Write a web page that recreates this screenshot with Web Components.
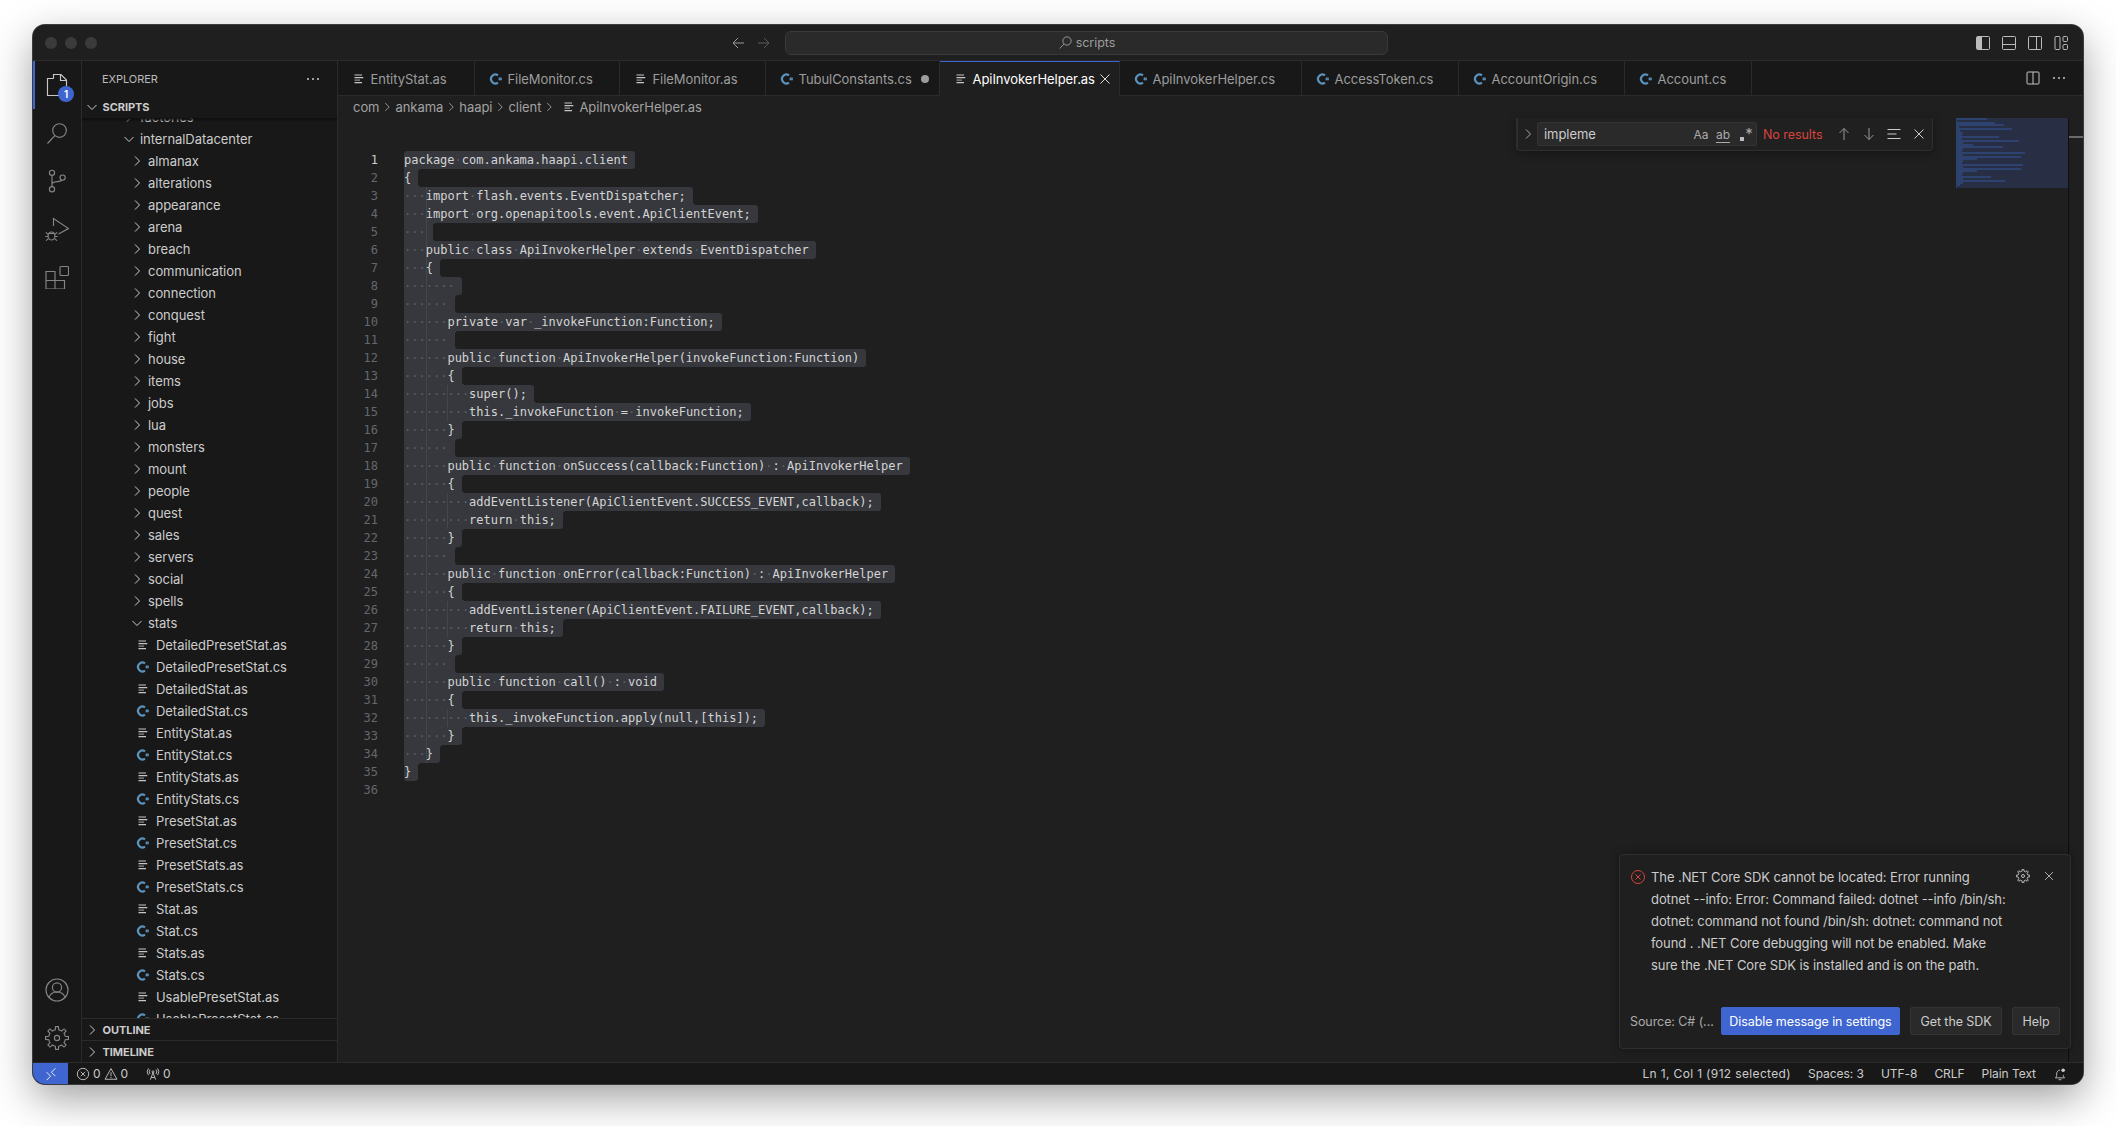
<!DOCTYPE html>
<html lang="en">
<head>
<meta charset="utf-8">
<title>scripts</title>
<style>
  html, body { margin: 0; background: #fff; }
  body { padding: 25px 33px 42px; font-family: Inter, "Liberation Sans", sans-serif; }
</style>
</head>
<body>
<vs-window>
  <vs-titlebar slot="title"></vs-titlebar>
  <vs-activitybar slot="activity"></vs-activitybar>
  <vs-sidebar slot="sidebar"></vs-sidebar>
  <vs-tabs slot="tabs">
    <vs-tab kind="as" width="137">EntityStat.as</vs-tab>
    <vs-tab kind="cs" width="145">FileMonitor.cs</vs-tab>
    <vs-tab kind="as" width="146">FileMonitor.as</vs-tab>
    <vs-tab kind="cs" width="174" dirty>TubulConstants.cs</vs-tab>
    <vs-tab kind="as" width="180" active>ApiInvokerHelper.as</vs-tab>
    <vs-tab kind="cs" width="182">ApiInvokerHelper.cs</vs-tab>
    <vs-tab kind="cs" width="157">AccessToken.cs</vs-tab>
    <vs-tab kind="cs" width="166">AccountOrigin.cs</vs-tab>
    <vs-tab kind="cs" width="127">Account.cs</vs-tab>
  </vs-tabs>
  <vs-breadcrumbs slot="crumbs"></vs-breadcrumbs>
  <vs-code slot="code"></vs-code>
  <vs-minimap slot="minimap"></vs-minimap>
  <vs-find slot="overlay"></vs-find>
  <vs-notification slot="overlay"></vs-notification>
  <vs-statusbar slot="status"></vs-statusbar>
</vs-window>

<script>
const CODE = [
  'package com.ankama.haapi.client',
  '{',
  '   import flash.events.EventDispatcher;',
  '   import org.openapitools.event.ApiClientEvent;',
  '   ',
  '   public class ApiInvokerHelper extends EventDispatcher',
  '   {',
  '       ',
  '      ',
  '      private var _invokeFunction:Function;',
  '      ',
  '      public function ApiInvokerHelper(invokeFunction:Function)',
  '      {',
  '         super();',
  '         this._invokeFunction = invokeFunction;',
  '      }',
  '      ',
  '      public function onSuccess(callback:Function) : ApiInvokerHelper',
  '      {',
  '         addEventListener(ApiClientEvent.SUCCESS_EVENT,callback);',
  '         return this;',
  '      }',
  '      ',
  '      public function onError(callback:Function) : ApiInvokerHelper',
  '      {',
  '         addEventListener(ApiClientEvent.FAILURE_EVENT,callback);',
  '         return this;',
  '      }',
  '      ',
  '      public function call() : void',
  '      {',
  '         this._invokeFunction.apply(null,[this]);',
  '      }',
  '   }',
  '}',
  ''
];

function gearPath(cx, cy, outer, inner, teeth) {
  let d = '';
  const step = Math.PI * 2 / teeth;
  for (let i = 0; i < teeth; i++) {
    const a = i * step;
    const pts = [
      [inner, a - step * 0.5], [inner, a - step * 0.26],
      [outer, a - step * 0.16], [outer, a + step * 0.16], [inner, a + step * 0.26]
    ];
    pts.forEach(([r, t], n) => {
      d += `${i === 0 && n === 0 ? 'M' : 'L'}${(cx + r * Math.cos(t)).toFixed(2)} ${(cy + r * Math.sin(t)).toFixed(2)}`;
    });
  }
  return d + 'Z';
}

const ICONS = {
  right: '<path d="M6 3.5 10.5 8 6 12.5"/>',
  down: '<path d="M3.5 6 8 10.5 12.5 6"/>',
  back: '<path d="M8 3 3 8l5 5M3 8h11"/>',
  forward: '<path d="m8 3 5 5-5 5M13 8H2"/>',
  up: '<path d="M3.5 7 8 2.5 12.5 7M8 2.5V14"/>',
  south: '<path d="M3.5 9 8 13.5 12.5 9M8 13.5V2"/>',
  close: '<path d="m3.5 3.5 9 9M12.5 3.5l-9 9"/>',
  search: '<circle cx="9.6" cy="6.4" r="4.4"/><path d="M6.4 9.6 1.8 14.4"/>',
  dots: '<g fill="currentColor" stroke="none"><circle cx="3" cy="8" r="1"/><circle cx="8" cy="8" r="1"/><circle cx="13" cy="8" r="1"/></g>',
  split: '<rect x="2" y="2" width="12" height="12" rx="1"/><path d="M8 2v12"/>',
  selection: '<path d="M1.5 3.5h13M1.5 8h9M1.5 12.5h13"/>',
  sideLeft: '<rect x="1.5" y="1.5" width="13" height="13" rx="1"/><path fill="currentColor" stroke="none" d="M2 2h5v12H2z"/>',
  panel: '<rect x="1.5" y="1.5" width="13" height="13" rx="1"/><path d="M1.5 9.5h13"/>',
  sideRight: '<rect x="1.5" y="1.5" width="13" height="13" rx="1"/><path d="M9.5 1.5v13"/>',
  layout: '<rect x="2" y="1.5" width="5" height="13" rx="1"/><rect x="10" y="1.5" width="4.5" height="5" rx="1"/><rect x="10" y="9.5" width="4.5" height="5" rx="1"/>',
  errorCircle: '<circle cx="8" cy="8" r="6.5"/><path d="m5.4 5.4 5.2 5.2M10.6 5.4l-5.2 5.2"/>',
  warning: '<path d="M8 1.8 14.8 14H1.2Z"/><path d="M8 6v4.5M8 11.5v1.2"/>',
  antenna: '<circle cx="8" cy="5.5" r="1.1"/><path d="M8 6.5 5 14.5M8 6.5l3 8M6 12h4M4.6 3a4 4 0 0 0 0 5M11.4 3a4 4 0 0 1 0 5M2.8 1.6a6.4 6.4 0 0 0 0 7.8M13.2 1.6a6.4 6.4 0 0 1 0 7.8"/>',
  remote: '<path d="M3 6 7.5 10.5 3 15M13 1.5 8.5 6l4.5 4.5"/>',
  bell: '<path d="M3 12.2c1-1 1.2-2.2 1.2-4.2 0-2.4 1.4-4.4 3.8-4.5M13 12.2c-1-.9-1.2-2-1.2-3.2M2.6 12.4h10.8M6.4 14.5h3.2"/><circle cx="11.6" cy="3.8" r="2" fill="currentColor" stroke="none"/>',
  file: '<path stroke-width="1.2" d="M3.5 4h7.5M3.5 6.6h8.8M3.5 11.6h7.5"/><path stroke-width="1.2" opacity=".7" d="M3.5 9.1h5.5"/>',
  csharp: '<path stroke="#5a93bd" stroke-width="2.2" d="M10 4.4a4.4 4.4 0 1 0 0 7.2"/><path stroke="#5a93bd" stroke-width=".9" d="M11.4 6.4v3M13 6.4v3M10.6 7.3h3.2M10.6 8.6h3.2"/>',
  files: '<path d="M8.5 5.5V1.5H16l5.5 5.5v13H16.5"/><path d="M8.5 5.5H2.5v17h14v-2.5"/><path d="M15.5 1.5V7.5h6"/>',
  searchBig: '<circle cx="14.5" cy="9.5" r="6.8"/><path d="M9.8 14.6 2.5 22.5"/>',
  scm: '<circle cx="7" cy="3.8" r="2.6"/><circle cx="7" cy="20.2" r="2.6"/><circle cx="17.6" cy="8.6" r="2.6"/><path d="M7 6.4v11.2M7 15c0-3.2 8.6-1.6 10.2-3.9"/>',
  debug: '<path d="M8.5 9V1.5L23.5 11.5 13.5 17"/><ellipse cx="6.5" cy="19" rx="3.4" ry="4"/><path d="M3.2 17.4.8 15.4M9.8 17.4l2.4-2M3 19.5H.3M10 19.5h2.7M3.4 21.6l-2.4 2M9.6 21.6l2.4 2M3.5 16.5h6"/>',
  extensions: '<path d="M1 6.5h9v9H1zM1 15.5h9v8.5H1zM10 15.5h9.5v8.5H10z"/><rect x="15" y="1.5" width="8.5" height="9" rx="1"/>',
  account: '<circle cx="12" cy="12" r="11"/><circle cx="12" cy="9.5" r="4.6"/><path d="M4 20c.8-3.8 3.6-6 8-6s7.2 2.2 8 6"/>',
  gear: `<path d="${gearPath(12, 12, 11.5, 8.4, 8)}"/><circle cx="12" cy="12" r="2.6"/>`
};

class VsIcon extends HTMLElement {
  connectedCallback() {
    const name = this.getAttribute('name');
    const size = this.getAttribute('size') || 16;
    const box = ['files', 'searchBig', 'scm', 'debug', 'extensions', 'account', 'gear'].includes(name) ? 24 : 16;
    this.attachShadow({ mode: 'open' }).innerHTML = /* html */`
      <style>
        :host { display: inline-flex; flex: none; }
        svg { display: block; fill: none; stroke: currentColor; stroke-width: ${this.getAttribute('weight') || 1}; }
      </style>
      <svg width="${size}" height="${size}" viewBox="0 0 ${box} ${box}">${ICONS[name]}</svg>`;
  }
}

class VsWindow extends HTMLElement {
  constructor() {
    super();
    this.attachShadow({ mode: 'open' }).innerHTML = /* html */`
      <style>
        :host {
          display: grid;
          grid-template-rows: 35px 1fr 22px;
          width: 2050px;
          height: 1059px;
          position: relative;
          border-radius: 12px;
          overflow: hidden;
          background: #1f1f1f;
          color: #ccc;
          box-shadow: 0 0 0 1px #3c3c3c, 0 14px 42px rgba(0,0,0,.38);
          font: 13px Inter, "Liberation Sans", sans-serif;
          letter-spacing: -.05px;
        }
        .main { display: flex; min-height: 0; border-top: 1px solid #2b2b2b; }
        .editor { flex: 1; min-width: 0; display: flex; flex-direction: column; border-left: 1px solid #2b2b2b; }
        .body { flex: 1; min-height: 0; display: flex; }
        .overlays { position: absolute; inset: 0; pointer-events: none; }
      </style>
      <slot name="title"></slot>
      <div class="main">
        <slot name="activity"></slot>
        <slot name="sidebar"></slot>
        <div class="editor">
          <slot name="tabs"></slot>
          <slot name="crumbs"></slot>
          <div class="body">
            <slot name="code"></slot>
            <slot name="minimap"></slot>
          </div>
        </div>
      </div>
      <slot name="status"></slot>
      <div class="overlays"><slot name="overlay"></slot></div>`;
  }
}

class VsTitlebar extends HTMLElement {
  constructor() {
    super();
    this.attachShadow({ mode: 'open' }).innerHTML = /* html */`
      <style>
        :host { display: flex; align-items: center; background: #1f1f1f; position: relative; }
        .lights { display: flex; gap: 8px; padding-left: 12px; width: 60px; }
        .lights i { width: 12px; height: 12px; border-radius: 50%; background: #3b3b3b; }
        .nav { margin-left: 625px; display: flex; gap: 10px; color: #9a9a9a; width: 42px; }
        .nav vs-icon + vs-icon { color: #5a5a5a; }
        .center {
          margin-left: 13px; width: 601px; height: 22px; border: 1px solid #3a3a3a; border-radius: 6px;
          background: #2a2a2a; display: flex; align-items: center; justify-content: center; gap: 3px;
          color: #9d9d9d; font-size: 12.5px;
        }
        .layout { margin-left: auto; display: flex; color: #bbb; padding-right: 9px; }
        .layout span { width: 26px; display: flex; justify-content: center; }
      </style>
      <div class="lights"><i></i><i></i><i></i></div>
      <div class="nav"><vs-icon name="back"></vs-icon><vs-icon name="forward"></vs-icon></div>
      <div class="center"><vs-icon name="search" size="15"></vs-icon><span>scripts</span></div>
      <div class="layout">
        <span><vs-icon name="sideLeft"></vs-icon></span><span><vs-icon name="panel"></vs-icon></span>
        <span><vs-icon name="sideRight"></vs-icon></span><span><vs-icon name="layout"></vs-icon></span>
      </div>`;
  }
}

class VsActivitybar extends HTMLElement {
  constructor() {
    super();
    const item = (name, extra = '') => `<div class="item ${extra}"><vs-icon name="${name}" size="24" weight="1.15"></vs-icon>${extra ? '<b>1</b>' : ''}</div>`;
    this.attachShadow({ mode: 'open' }).innerHTML = /* html */`
      <style>
        :host { display: flex; flex-direction: column; width: 48px; height: 100%; background: #181818; border-right: 1px solid #2b2b2b; flex: none; color: #858585; }
        .item { height: 48px; display: flex; align-items: center; justify-content: center; position: relative; flex: none; }
        .active { color: #c8c8c8; }
        .active::before { content: ''; position: absolute; left: 0; top: 0; bottom: 0; width: 2px; background: #3f66d0; }
        b { position: absolute; left: 25px; top: 25px; width: 16px; height: 16px; border-radius: 50%; background: #3f66d0; color: #fff; font: 600 10px/16px Inter, sans-serif; text-align: center; }
        .spacer { flex: 1; }
      </style>
      ${item('files', 'active')}${item('searchBig')}${item('scm')}${item('debug')}${item('extensions')}
      <div class="spacer"></div>
      ${item('account')}${item('gear')}`;
  }
}

class VsTreeRow extends HTMLElement {
  connectedCallback() {
    const kind = this.getAttribute('kind');
    const glyph = { closed: 'right', open: 'down' }[kind];
    const pad = { 1: 39, 2: 47, 3: 53 }[this.getAttribute('depth')];
    this.attachShadow({ mode: 'open' }).innerHTML = /* html */`
      <style>
        :host { display: flex; align-items: center; height: 22px; padding-left: ${pad}px; color: #ccc; white-space: nowrap; }
        .twist { width: 16px; display: flex; margin-right: 3px; }
        .ficon { width: 16px; display: flex; margin-right: 5px; color: #c5c5c5; }
      </style>
      ${glyph ? `<span class="twist"><vs-icon name="${glyph}"></vs-icon></span>` : `<span class="ficon"><vs-icon name="${kind === 'cs' ? 'csharp' : 'file'}"></vs-icon></span>`}
      <slot></slot>`;
  }
}

class VsSidebar extends HTMLElement {
  constructor() {
    super();
    const folders = ['almanax', 'alterations', 'appearance', 'arena', 'breach', 'communication', 'connection', 'conquest', 'fight', 'house', 'items', 'jobs', 'lua', 'monsters', 'mount', 'people', 'quest', 'sales', 'servers', 'social', 'spells'];
    const files = ['DetailedPresetStat', 'DetailedStat', 'EntityStat', 'EntityStats', 'PresetStat', 'PresetStats', 'Stat', 'Stats', 'UsablePresetStat'];
    const rows = [
      '<vs-tree-row kind="closed" depth="1">factories</vs-tree-row>',
      '<vs-tree-row kind="open" depth="1">internalDatacenter</vs-tree-row>',
      ...folders.map(f => `<vs-tree-row kind="closed" depth="2">${f}</vs-tree-row>`),
      '<vs-tree-row kind="open" depth="2">stats</vs-tree-row>',
      ...files.flatMap(f => [`<vs-tree-row kind="as" depth="3">${f}.as</vs-tree-row>`, `<vs-tree-row kind="cs" depth="3">${f}.cs</vs-tree-row>`])
    ].join('');
    this.attachShadow({ mode: 'open' }).innerHTML = /* html */`
      <style>
        :host { display: flex; flex-direction: column; width: 255px; height: 100%; background: #181818; flex: none; }
        .title { display: flex; align-items: center; justify-content: space-between; height: 35px; padding: 0 16px 0 20px; font-size: 11px; color: #bbb; }
        .title vs-icon { color: #ccc; }
        .section { display: flex; align-items: center; height: 22px; flex: none; font-size: 11px; font-weight: 700; color: #ccc; padding-left: 2px; gap: 2.5px; box-sizing: border-box; }
        .section.rule { border-top: 1px solid #2b2b2b; height: 22px; }
        .section vs-icon { width: 16px; }
        .tree { flex: 1; min-height: 0; overflow: hidden; position: relative; }
        .tree::before { content: ''; position: absolute; left: 0; right: 0; top: 0; height: 4px; background: linear-gradient(#0d0d0d, transparent); z-index: 1; }
        .rows { margin-top: -12px; }
      </style>
      <div class="title"><span>EXPLORER</span><vs-icon name="dots"></vs-icon></div>
      <div class="section"><vs-icon name="down"></vs-icon>SCRIPTS</div>
      <div class="tree"><div class="rows">${rows}</div></div>
      <div class="section rule"><vs-icon name="right"></vs-icon>OUTLINE</div>
      <div class="section rule"><vs-icon name="right"></vs-icon>TIMELINE</div>`;
  }
}

class VsTab extends HTMLElement {
  connectedCallback() {
    const active = this.hasAttribute('active');
    const trail = active ? '<vs-icon name="close" size="16"></vs-icon>' : this.hasAttribute('dirty') ? '<i class="dot"></i>' : '';
    this.attachShadow({ mode: 'open' }).innerHTML = /* html */`
      <style>
        :host {
          display: flex; align-items: center; box-sizing: border-box; flex: none; position: relative;
          width: ${this.getAttribute('width')}px; height: 35px; padding-left: 13px; white-space: nowrap;
          background: ${active ? '#1f1f1f' : '#181818'}; color: ${active ? '#fff' : '#9d9d9d'};
          border-right: 1px solid #2b2b2b;
          ${active ? 'border-top: 1px solid #3f66d0; border-bottom: 1px solid #1f1f1f;' : 'border-top: 1px solid #181818; border-bottom: 1px solid #2b2b2b;'}
        }
        .ficon { margin-right: 3.5px; color: #c5c5c5; display: flex; }
        .trail { position: absolute; right: 6px; top: 0; bottom: 0; width: 16px; display: flex; align-items: center; justify-content: center; color: #ddd; }
        .dot { width: 8px; height: 8px; border-radius: 50%; background: #9d9d9d; }
      </style>
      <span class="ficon"><vs-icon name="${this.getAttribute('kind') === 'cs' ? 'csharp' : 'file'}"></vs-icon></span>
      <slot></slot>
      <span class="trail">${trail}</span>`;
  }
}

class VsTabs extends HTMLElement {
  constructor() {
    super();
    this.attachShadow({ mode: 'open' }).innerHTML = /* html */`
      <style>
        :host { display: flex; height: 35px; flex: none; background: #181818; }
        .rest { flex: 1; border-bottom: 1px solid #2b2b2b; display: flex; align-items: center; justify-content: flex-end; gap: 10px; padding-right: 16px; color: #c5c5c5; }
      </style>
      <slot></slot>
      <div class="rest"><vs-icon name="split"></vs-icon><vs-icon name="dots"></vs-icon></div>`;
  }
}

class VsBreadcrumbs extends HTMLElement {
  constructor() {
    super();
    const sep = '<vs-icon name="right" size="14"></vs-icon>';
    this.attachShadow({ mode: 'open' }).innerHTML = /* html */`
      <style>
        :host { display: flex; align-items: center; height: 22px; flex: none; padding-left: 15px; gap: 1px; color: #a2a2a2; white-space: nowrap; }
        .leaf { display: flex; margin: 0 1px 0 4px; color: #c5c5c5; }
      </style>
      <span>com</span>${sep}<span>ankama</span>${sep}<span>haapi</span>${sep}<span>client</span>${sep}
      <span class="leaf"><vs-icon name="file"></vs-icon></span><span>ApiInvokerHelper.as</span>`;
  }
}

class VsCode extends HTMLElement {
  static get styles() {
    return /* css */`
      :host {
        --sel: #36383d;
        display: block; flex: 1; min-width: 0; padding-top: 33px;
        font: 12px/18px "DejaVu Sans Mono", "Liberation Mono", monospace; color: #d4d4d4;
        letter-spacing: 0; white-space: pre; overflow: hidden;
      }
      .line { display: flex; height: 18px; }
      .num { width: 40px; margin-right: 26px; text-align: right; color: #64686e; flex: none; }
      .num.now { color: #ccc; }
      .sel {
        display: inline-block; height: 18px; padding-right: 1ch; position: relative;
        background-color: var(--sel);
      }
      .g3 { background-image: linear-gradient(#44464b, #44464b); background-size: 1px 100%; background-repeat: no-repeat; background-position: 3ch 0; }
      .g6 { background-image: linear-gradient(#44464b, #44464b), linear-gradient(#44464b, #44464b); background-size: 1px 100%; background-repeat: no-repeat; background-position: 3ch 0, 6ch 0; }
      .ws { color: #5c5e63; }
      .tr { border-top-right-radius: 3px; }
      .br { border-bottom-right-radius: 3px; }
      .tl { border-top-left-radius: 3px; }
      .bl { border-bottom-left-radius: 3px; }
      .ct::before, .cb::after { content: ''; position: absolute; left: 100%; width: 3px; height: 3px; }
      .ct::before { top: 0; background: radial-gradient(circle at 100% 100%, transparent 2.6px, var(--sel) 3.2px); }
      .cb::after { bottom: 0; background: radial-gradient(circle at 100% 0, transparent 2.6px, var(--sel) 3.2px); }
    `;
  }

  constructor() {
    super();
    this.attachShadow({ mode: 'open' });
  }

  connectedCallback() {
    const lens = CODE.map((l, i) => (i === CODE.length - 1 ? 0 : l.length + 1));
    const deep = n => [14, 15, 20, 21, 26, 27, 32].includes(n);
    const rows = CODE.map((text, i) => {
      const n = i + 1;
      const num = `<span class="num${i === 0 ? ' now' : ''}">${n}</span>`;
      if (!lens[i]) return `<div class="line">${num}</div>`;
      const prev = lens[i - 1] || 0;
      const next = lens[i + 1] || 0;
      const cls = ['sel'];
      if (n >= 3 && n <= 34) cls.push(deep(n) ? 'g6' : 'g3');
      if (prev < lens[i]) cls.push('tr');
      if (next < lens[i]) cls.push('br');
      if (prev > lens[i]) cls.push('ct');
      if (next > lens[i]) cls.push('cb');
      if (i === 0) cls.push('tl');
      if (i === 34) cls.push('bl');
      const html = text.replace(/ /g, '<span class="ws">·</span>');
      return `<div class="line">${num}<span class="${cls.join(' ')}">${html}</span></div>`;
    }).join('');
    this.shadowRoot.innerHTML = `<style>${VsCode.styles}</style>${rows}`;
  }
}

class VsMinimap extends HTMLElement {
  constructor() {
    super();
    const rows = CODE.slice(0, 35).map(l => `<div style="width:${l.length}px"></div>`).join('');
    this.attachShadow({ mode: 'open' }).innerHTML = /* html */`
      <style>
        :host { display: flex; flex: none; width: 127px; height: 100%; }
        .map { width: 112px; height: 70px; background: #282f45; }
        .map div { height: 2px; background: #2e4270; }
        .scroll { width: 14px; border-left: 1px solid #0e0e0e; position: relative; }
        .scroll::after { content: ''; position: absolute; left: 0; right: 0; top: 18px; height: 2px; background: #6a6a6a; }
      </style>
      <div class="map">${rows}</div>
      <div class="scroll"></div>`;
  }
}

class VsFind extends HTMLElement {
  constructor() {
    super();
    this.attachShadow({ mode: 'open' }).innerHTML = /* html */`
      <style>
        :host {
          position: absolute; left: 1483px; top: 93px; width: 417px; height: 33px; box-sizing: border-box;
          display: flex; align-items: center; background: #202020; color: #ccc;
          border-left: 2px solid #2e2e2e; border-bottom: 1px solid #2e2e2e; border-right: 1px solid #2e2e2e;
          border-radius: 0 0 4px 4px; box-shadow: 0 2px 8px rgba(0,0,0,.36);
        }
        .toggle { width: 19px; flex: none; display: flex; justify-content: center; color: #aaa; }
        .input {
          width: 220px; flex: none; height: 24px; box-sizing: border-box; display: flex; align-items: center;
          background: #2a2a2a; border: 1px solid #333; border-radius: 2px; padding-left: 6px; color: #ccc;
        }
        .text { flex: 1; }
        .opt { color: #aaa; font-size: 12px; width: 22px; text-align: center; }
        .opt.u { text-decoration: underline; text-underline-offset: 3px; }
        .rx { position: relative; }
        .rx::before { content: ''; position: absolute; left: 6px; bottom: 1px; width: 4px; height: 4px; background: #bbb; }
        .rx span { margin-left: 8px; font-size: 15px; line-height: 10px; }
        .none { margin-left: 6px; width: 69px; flex: none; color: #d8453c; font-size: 12.5px; white-space: nowrap; }
        .act { display: flex; flex: none; color: #999; margin-left: 4px; }
        .act vs-icon { margin-right: 9px; }
        .act vs-icon:last-child { margin-right: 0; }
        .act .on { color: #ccc; }
      </style>
      <span class="toggle"><vs-icon name="right"></vs-icon></span>
      <div class="input">
        <span class="text">impleme</span>
        <span class="opt">Aa</span><span class="opt u">ab</span><span class="opt rx"><span>*</span></span>
      </div>
      <span class="none">No results</span>
      <div class="act">
        <vs-icon name="up"></vs-icon><vs-icon name="south"></vs-icon>
        <vs-icon class="on" name="selection"></vs-icon><vs-icon class="on" name="close"></vs-icon>
      </div>`;
  }
}

class VsNotification extends HTMLElement {
  constructor() {
    super();
    this.attachShadow({ mode: 'open' }).innerHTML = /* html */`
      <style>
        :host {
          position: absolute; left: 1586px; top: 829px; width: 452px; height: 195px; box-sizing: border-box;
          background: #1f1f1f; border: 1px solid #2f2f2f; border-radius: 4px; color: #ccc;
          box-shadow: 0 0 8px rgba(0,0,0,.36); padding: 11px 10px 0 10px; display: flex; flex-direction: column;
          letter-spacing: -.08px;
        }
        .msg { display: flex; height: 141px; line-height: 22px; }
        .err { color: #d8453c; margin: 3px 5px 0 0; display: flex; }
        .text { flex: 1; white-space: nowrap; }
        .tools { display: flex; gap: 12px; color: #c0c0c0; margin: 3px 4px 0 0; }
        .foot { display: flex; align-items: center; font-size: 12.5px; }
        .src { width: 91px; color: #aaa; white-space: nowrap; flex: none; }
        .btn { height: 28px; box-sizing: border-box; display: flex; align-items: center; justify-content: center; flex: none; border: 1px solid #333; border-radius: 2px; background: #2a2a2a; color: #ccc; margin-right: 10px; }
        .btn:last-child { margin-right: 0; }
        .primary { width: 179px; background: #3f66d0; border-color: #3f66d0; color: #fff; }
      </style>
      <div class="msg">
        <span class="err"><vs-icon name="errorCircle"></vs-icon></span>
        <div class="text">The .NET Core SDK cannot be located: Error running<br>dotnet --info: Error: Command failed: dotnet --info /bin/sh:<br>dotnet: command not found /bin/sh: dotnet: command not<br>found . .NET Core debugging will not be enabled. Make<br>sure the .NET Core SDK is installed and is on the path.</div>
        <div class="tools"><vs-icon name="gear" size="14" weight="1.7"></vs-icon><vs-icon name="close" size="14"></vs-icon></div>
      </div>
      <div class="foot">
        <span class="src">Source: C# (...</span>
        <span class="btn primary">Disable message in settings</span>
        <span class="btn" style="width:92px">Get the SDK</span>
        <span class="btn" style="width:48px">Help</span>
      </div>`;
  }
}

class VsStatusbar extends HTMLElement {
  constructor() {
    super();
    this.attachShadow({ mode: 'open' }).innerHTML = /* html */`
      <style>
        :host { display: flex; align-items: center; height: 22px; box-sizing: border-box; background: #181818; border-top: 1px solid #2b2b2b; font-size: 12px; color: #ccc; white-space: nowrap; }
        .remote { width: 35px; align-self: stretch; background: #3f66d0; color: #fff; display: flex; align-items: center; justify-content: center; }
        .left { display: flex; align-items: center; padding-left: 8px; gap: 3px; }
        .wifi { margin-left: 15px; }
        .right { margin-left: auto; display: flex; align-items: center; gap: 17px; padding-right: 16px; }
        .pos { letter-spacing: .35px; }
      </style>
      <div class="remote"><vs-icon name="remote" size="14"></vs-icon></div>
      <div class="left">
        <vs-icon name="errorCircle" size="14"></vs-icon><span>0</span>
        <vs-icon name="warning" size="14"></vs-icon><span>0</span>
        <vs-icon class="wifi" name="antenna" size="14"></vs-icon><span>0</span>
      </div>
      <div class="right">
        <span class="pos">Ln 1, Col 1 (912 selected)</span><span>Spaces: 3</span><span>UTF-8</span><span>CRLF</span><span>Plain Text</span>
        <vs-icon name="bell" size="14"></vs-icon>
      </div>`;
  }
}

customElements.define('vs-icon', VsIcon);
customElements.define('vs-tree-row', VsTreeRow);
customElements.define('vs-tab', VsTab);
customElements.define('vs-tabs', VsTabs);
customElements.define('vs-titlebar', VsTitlebar);
customElements.define('vs-activitybar', VsActivitybar);
customElements.define('vs-sidebar', VsSidebar);
customElements.define('vs-breadcrumbs', VsBreadcrumbs);
customElements.define('vs-code', VsCode);
customElements.define('vs-minimap', VsMinimap);
customElements.define('vs-find', VsFind);
customElements.define('vs-notification', VsNotification);
customElements.define('vs-statusbar', VsStatusbar);
customElements.define('vs-window', VsWindow);
</script>
</body>
</html>
